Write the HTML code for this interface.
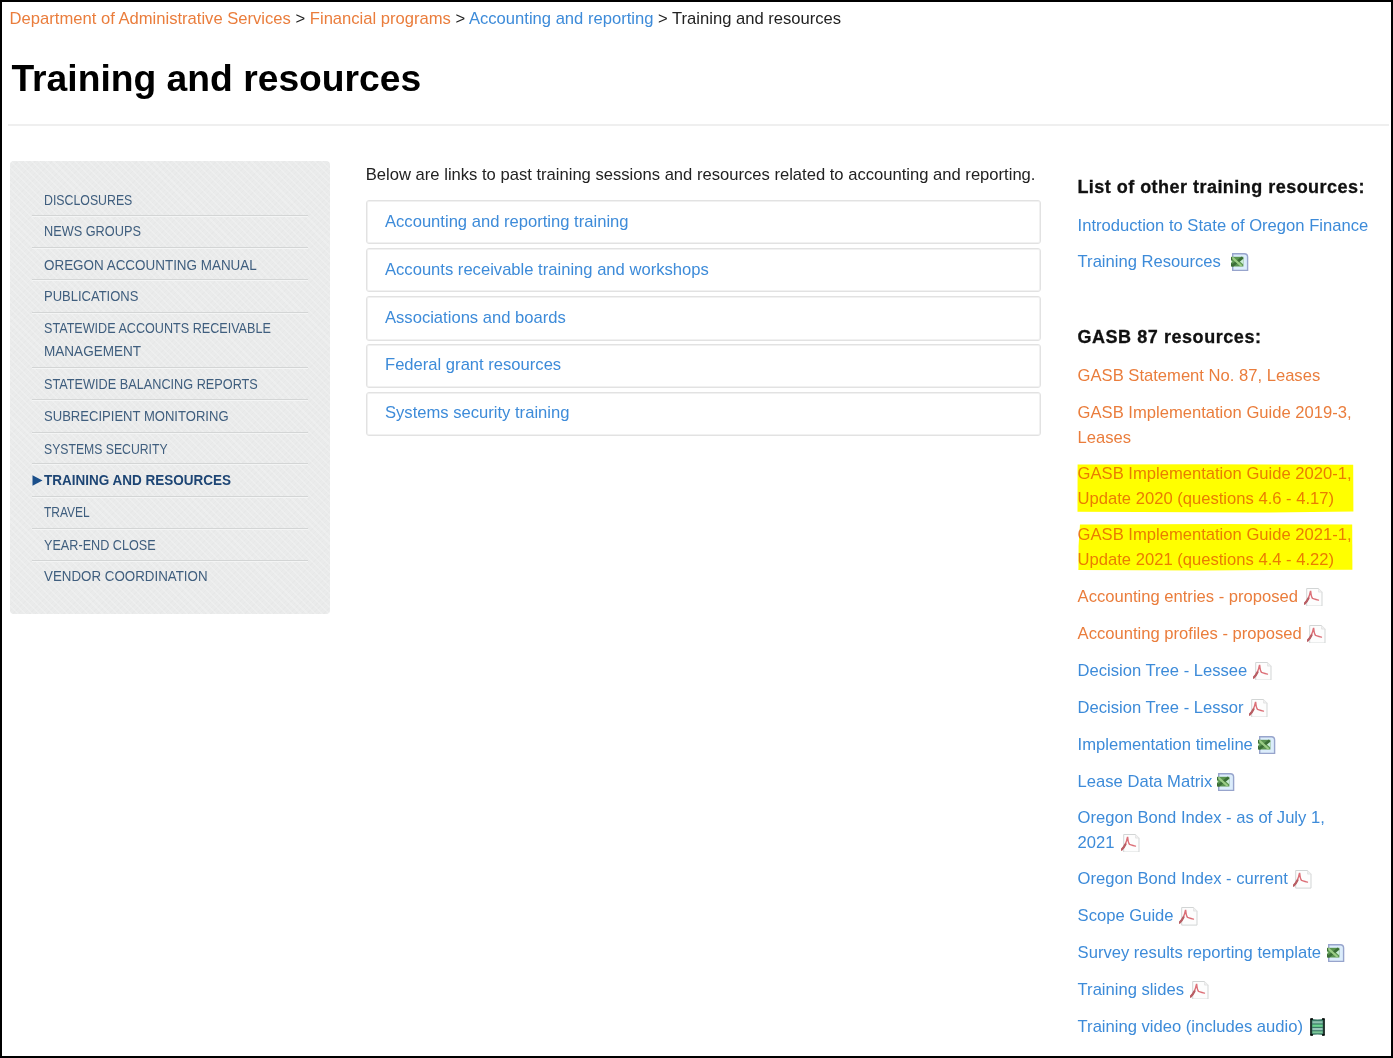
<!DOCTYPE html>
<html><head><meta charset="utf-8"><title>Training and resources</title><style>
*{margin:0;padding:0;box-sizing:border-box}
html,body{width:1393px;height:1058px;overflow:hidden;background:#fff}
body{position:relative;font-family:"Liberation Sans",sans-serif;color:#222}
.t{position:absolute;white-space:nowrap}
.frame{position:absolute;left:0;top:0;width:1393px;height:1058px;border:2px solid #000;z-index:50;pointer-events:none}
.o{color:#ea7d3c}.b{color:#3d8bd9}.d{color:#222}
.side{position:absolute;left:9.5px;top:161px;width:320.8px;height:453px;border-radius:4px;
 background-color:#eaebeb;
 background-image:repeating-linear-gradient(45deg,rgba(255,255,255,.2) 0 1.5px,rgba(255,255,255,0) 1.5px 5px),repeating-linear-gradient(-45deg,rgba(0,0,0,.012) 0 1px,rgba(0,0,0,0) 1px 4px)}
.sep{position:absolute;left:32px;width:276px;height:2px;background:#d3d5d5;border-bottom:1px solid #f4f5f5}
.si{position:absolute;font-size:14.4px;color:#3f5e7e;white-space:nowrap;transform-origin:0 15px}
.box{position:absolute;left:366px;width:675px;height:44.4px;border:1px solid #e2e2e2;border-radius:3px;background:#fff;box-shadow:inset 0 0 0 1px #f1f1f1}
.hl{position:absolute;background:#ffff00}
.ic{position:absolute}
.ii{display:inline-block}
</style></head><body>
<div class="t" style="left:9.60px;top:8.54px;font-size:16.60px;line-height:20px;color:#222;"><span class="o">Department of Administrative Services</span> &gt; <span class="o">Financial programs</span> &gt; <span class="b">Accounting and reporting</span> &gt; Training and resources</div>
<div class="t" style="left:11.40px;top:55.99px;font-size:37.25px;line-height:44px;font-weight:bold;color:#000;">Training and resources</div>
<div style="position:absolute;left:8px;top:124px;width:1381px;height:2px;background:#efefef"></div>
<div class="side"></div>
<div class="si" style="left:44.2px;top:189.51px;line-height:20px;transform:scale(0.8564,1.06);"><span>DISCLOSURES</span></div>
<div class="si" style="left:44.2px;top:221.41px;line-height:20px;transform:scale(0.8843,1.06);"><span>NEWS GROUPS</span></div>
<div class="si" style="left:44.2px;top:254.61px;line-height:20px;transform:scale(0.9336,1.06);"><span>OREGON ACCOUNTING MANUAL</span></div>
<div class="si" style="left:44.2px;top:286.01px;line-height:20px;transform:scale(0.9029,1.06);"><span>PUBLICATIONS</span></div>
<div class="si" style="left:44.2px;top:317.71px;line-height:20px;transform:scale(0.8755,1.06);"><span>STATEWIDE ACCOUNTS RECEIVABLE</span></div>
<div class="si" style="left:44.2px;top:341.41px;line-height:20px;transform:scale(0.9412,1.06);"><span>MANAGEMENT</span></div>
<div class="si" style="left:44.2px;top:374.01px;line-height:20px;transform:scale(0.8826,1.06);"><span>STATEWIDE BALANCING REPORTS</span></div>
<div class="si" style="left:44.2px;top:405.81px;line-height:20px;transform:scale(0.9075,1.06);"><span>SUBRECIPIENT MONITORING</span></div>
<div class="si" style="left:44.2px;top:438.81px;line-height:20px;transform:scale(0.8493,1.06);"><span>SYSTEMS SECURITY</span></div>
<div class="si" style="left:44.2px;top:470.01px;line-height:20px;transform:scale(0.9382,1.06);font-weight:bold;color:#1d4574;"><span>TRAINING AND RESOURCES</span></div>
<div class="si" style="left:44.2px;top:502.31px;line-height:20px;transform:scale(0.8327,1.06);"><span>TRAVEL</span></div>
<div class="si" style="left:44.2px;top:534.61px;line-height:20px;transform:scale(0.8784,1.06);"><span>YEAR-END CLOSE</span></div>
<div class="si" style="left:44.2px;top:566.31px;line-height:20px;transform:scale(0.9269,1.06);"><span>VENDOR COORDINATION</span></div>
<svg class="ic" style="left:32px;top:474.5px" width="11" height="11" viewBox="0 0 11 11"><path d="M0.5 0.3 L10.5 5.5 L0.5 10.7Z" fill="#1b4f8a"/></svg>
<div class="sep" style="top:215.2px"></div>
<div class="sep" style="top:247.0px"></div>
<div class="sep" style="top:279.3px"></div>
<div class="sep" style="top:311.6px"></div>
<div class="sep" style="top:367.2px"></div>
<div class="sep" style="top:398.9px"></div>
<div class="sep" style="top:431.6px"></div>
<div class="sep" style="top:463.4px"></div>
<div class="sep" style="top:496.0px"></div>
<div class="sep" style="top:528.2px"></div>
<div class="sep" style="top:559.6px"></div>
<div class="t" style="left:365.80px;top:164.54px;font-size:16.60px;line-height:20px;color:#222;">Below are links to past training sessions and resources related to accounting and reporting.</div>
<div class="box" style="top:200.0px"></div>
<div class="t" style="left:385.00px;top:212.14px;font-size:16.60px;line-height:20px;color:#3d8bd9;">Accounting and reporting training</div>
<div class="box" style="top:247.8px"></div>
<div class="t" style="left:385.00px;top:260.14px;font-size:16.60px;line-height:20px;color:#3d8bd9;">Accounts receivable training and workshops</div>
<div class="box" style="top:296.4px"></div>
<div class="t" style="left:385.00px;top:307.74px;font-size:16.60px;line-height:20px;color:#3d8bd9;">Associations and boards</div>
<div class="box" style="top:344.1px"></div>
<div class="t" style="left:385.00px;top:355.24px;font-size:16.60px;line-height:20px;color:#3d8bd9;">Federal grant resources</div>
<div class="box" style="top:391.6px"></div>
<div class="t" style="left:385.00px;top:402.54px;font-size:16.60px;line-height:20px;color:#3d8bd9;">Systems security training</div>
<div class="t" style="left:1077.40px;top:176.56px;font-size:18.00px;line-height:20px;font-weight:bold;color:#111;letter-spacing:0.47px;-webkit-text-stroke:0.3px #111;">List of other training resources:</div>
<div class="t" style="left:1077.40px;top:327.16px;font-size:18.00px;line-height:20px;font-weight:bold;color:#111;letter-spacing:0.56px;-webkit-text-stroke:0.3px #111;">GASB 87 resources:</div>
<div class="t" style="left:1077.60px;top:215.54px;font-size:16.60px;line-height:20px;color:#3d8bd9;">Introduction to State of Oregon Finance</div>
<div class="t" style="left:1077.60px;top:252.44px;font-size:16.60px;line-height:20px;color:#3d8bd9;">Training Resources <svg class="ii" style="margin-left:5.4px;vertical-align:-4px" width="18" height="18" viewBox="0 0 18 18"><path d="M1.7 0.8 H13.4 Q16.6 0.8 16.6 4 V17.4 H1.7 Z" fill="#dcedfb" stroke="#97a4cc" stroke-width="1.4"/><rect x="0" y="3.8" width="12.4" height="9.7" fill="#5a9450"/><path d="M12.4 5.6 L8.9 8.6 L12.4 11.6 Z" fill="#c9ebd6"/><path d="M0 7.2 L1.5 8.6 L0 10 Z" fill="#d4efcf"/><path d="M11.6 4.4 L1 13" stroke="#3b6e37" stroke-width="2.6"/><path d="M1 4.4 L10.6 13" stroke="#9ccd86" stroke-width="2.2"/><path d="M0.6 4.2 V7 M0.6 10.3 V13.2" stroke="#3b6a36" stroke-width="1.2"/></svg></div>
<div class="t" style="left:1077.60px;top:365.64px;font-size:16.60px;line-height:20px;color:#ea7d3c;">GASB Statement No. 87, Leases</div>
<div class="t" style="left:1077.60px;top:402.64px;font-size:16.60px;line-height:20px;color:#ea7d3c;">GASB Implementation Guide 2019-3,</div>
<div class="t" style="left:1077.60px;top:427.54px;font-size:16.60px;line-height:20px;color:#ea7d3c;">Leases</div>
<div class="t" style="left:1077.60px;top:464.14px;font-size:16.60px;line-height:20px;color:#ea7d3c;">GASB Implementation Guide 2020-1,</div>
<div class="t" style="left:1077.60px;top:488.94px;font-size:16.60px;line-height:20px;color:#ea7d3c;">Update 2020 (questions 4.6 - 4.17)</div>
<div class="t" style="left:1077.60px;top:525.14px;font-size:16.60px;line-height:20px;color:#ea7d3c;">GASB Implementation Guide 2021-1,</div>
<div class="t" style="left:1077.60px;top:549.54px;font-size:16.60px;line-height:20px;color:#ea7d3c;">Update 2021 (questions 4.4 - 4.22)</div>
<div class="t" style="left:1077.60px;top:586.94px;font-size:16.60px;line-height:20px;color:#ea7d3c;">Accounting entries - proposed <svg class="ii" style="margin-left:1.2px;vertical-align:-4.4px" width="19" height="18.6" viewBox="0 0 19 18.6"><path d="M2.7 0.5 H14.6 L18 3.9 V18.1 H2.7 Z" fill="#fdfdfd" stroke="#d2d5d5" stroke-width="1"/><path d="M14.6 0.6 V4.1 H18.1" fill="#f0f0f0" stroke="#dcdcdc" stroke-width="0.7"/><path d="M0.6 15.6 C3 13.5 5.3 9 6.6 2.8 C7 6.8 7.6 9.6 8.6 10.4 C10.5 11.1 12.5 11.5 14.4 12.1" fill="none" stroke="#dc7078" stroke-width="1.5" stroke-linecap="round"/><path d="M0.6 15.6 C2.4 14 3.6 12.3 4.5 10.3" fill="none" stroke="#b85e64" stroke-width="2.1" stroke-linecap="round"/></svg></div>
<div class="t" style="left:1077.60px;top:624.04px;font-size:16.60px;line-height:20px;color:#ea7d3c;">Accounting profiles - proposed <svg class="ii" style="margin-left:1.0px;vertical-align:-4.4px" width="19" height="18.6" viewBox="0 0 19 18.6"><path d="M2.7 0.5 H14.6 L18 3.9 V18.1 H2.7 Z" fill="#fdfdfd" stroke="#d2d5d5" stroke-width="1"/><path d="M14.6 0.6 V4.1 H18.1" fill="#f0f0f0" stroke="#dcdcdc" stroke-width="0.7"/><path d="M0.6 15.6 C3 13.5 5.3 9 6.6 2.8 C7 6.8 7.6 9.6 8.6 10.4 C10.5 11.1 12.5 11.5 14.4 12.1" fill="none" stroke="#dc7078" stroke-width="1.5" stroke-linecap="round"/><path d="M0.6 15.6 C2.4 14 3.6 12.3 4.5 10.3" fill="none" stroke="#b85e64" stroke-width="2.1" stroke-linecap="round"/></svg></div>
<div class="t" style="left:1077.60px;top:661.04px;font-size:16.60px;line-height:20px;color:#3d8bd9;">Decision Tree - Lessee <svg class="ii" style="margin-left:0.6px;vertical-align:-4.4px" width="19" height="18.6" viewBox="0 0 19 18.6"><path d="M2.7 0.5 H14.6 L18 3.9 V18.1 H2.7 Z" fill="#fdfdfd" stroke="#d2d5d5" stroke-width="1"/><path d="M14.6 0.6 V4.1 H18.1" fill="#f0f0f0" stroke="#dcdcdc" stroke-width="0.7"/><path d="M0.6 15.6 C3 13.5 5.3 9 6.6 2.8 C7 6.8 7.6 9.6 8.6 10.4 C10.5 11.1 12.5 11.5 14.4 12.1" fill="none" stroke="#dc7078" stroke-width="1.5" stroke-linecap="round"/><path d="M0.6 15.6 C2.4 14 3.6 12.3 4.5 10.3" fill="none" stroke="#b85e64" stroke-width="2.1" stroke-linecap="round"/></svg></div>
<div class="t" style="left:1077.60px;top:697.94px;font-size:16.60px;line-height:20px;color:#3d8bd9;">Decision Tree - Lessor <svg class="ii" style="margin-left:0.6px;vertical-align:-4.4px" width="19" height="18.6" viewBox="0 0 19 18.6"><path d="M2.7 0.5 H14.6 L18 3.9 V18.1 H2.7 Z" fill="#fdfdfd" stroke="#d2d5d5" stroke-width="1"/><path d="M14.6 0.6 V4.1 H18.1" fill="#f0f0f0" stroke="#dcdcdc" stroke-width="0.7"/><path d="M0.6 15.6 C3 13.5 5.3 9 6.6 2.8 C7 6.8 7.6 9.6 8.6 10.4 C10.5 11.1 12.5 11.5 14.4 12.1" fill="none" stroke="#dc7078" stroke-width="1.5" stroke-linecap="round"/><path d="M0.6 15.6 C2.4 14 3.6 12.3 4.5 10.3" fill="none" stroke="#b85e64" stroke-width="2.1" stroke-linecap="round"/></svg></div>
<div class="t" style="left:1077.60px;top:734.84px;font-size:16.60px;line-height:20px;color:#3d8bd9;">Implementation timeline <svg class="ii" style="margin-left:0.4px;vertical-align:-4px" width="18" height="18" viewBox="0 0 18 18"><path d="M1.7 0.8 H13.4 Q16.6 0.8 16.6 4 V17.4 H1.7 Z" fill="#dcedfb" stroke="#97a4cc" stroke-width="1.4"/><rect x="0" y="3.8" width="12.4" height="9.7" fill="#5a9450"/><path d="M12.4 5.6 L8.9 8.6 L12.4 11.6 Z" fill="#c9ebd6"/><path d="M0 7.2 L1.5 8.6 L0 10 Z" fill="#d4efcf"/><path d="M11.6 4.4 L1 13" stroke="#3b6e37" stroke-width="2.6"/><path d="M1 4.4 L10.6 13" stroke="#9ccd86" stroke-width="2.2"/><path d="M0.6 4.2 V7 M0.6 10.3 V13.2" stroke="#3b6a36" stroke-width="1.2"/></svg></div>
<div class="t" style="left:1077.60px;top:771.64px;font-size:16.60px;line-height:20px;color:#3d8bd9;">Lease Data Matrix <svg class="ii" style="margin-left:0.4px;vertical-align:-4px" width="18" height="18" viewBox="0 0 18 18"><path d="M1.7 0.8 H13.4 Q16.6 0.8 16.6 4 V17.4 H1.7 Z" fill="#dcedfb" stroke="#97a4cc" stroke-width="1.4"/><rect x="0" y="3.8" width="12.4" height="9.7" fill="#5a9450"/><path d="M12.4 5.6 L8.9 8.6 L12.4 11.6 Z" fill="#c9ebd6"/><path d="M0 7.2 L1.5 8.6 L0 10 Z" fill="#d4efcf"/><path d="M11.6 4.4 L1 13" stroke="#3b6e37" stroke-width="2.6"/><path d="M1 4.4 L10.6 13" stroke="#9ccd86" stroke-width="2.2"/><path d="M0.6 4.2 V7 M0.6 10.3 V13.2" stroke="#3b6a36" stroke-width="1.2"/></svg></div>
<div class="t" style="left:1077.60px;top:808.44px;font-size:16.60px;line-height:20px;color:#3d8bd9;">Oregon Bond Index - as of July 1,</div>
<div class="t" style="left:1077.60px;top:832.74px;font-size:16.60px;line-height:20px;color:#3d8bd9;">2021 <svg class="ii" style="margin-left:2.0px;vertical-align:-4.4px" width="19" height="18.6" viewBox="0 0 19 18.6"><path d="M2.7 0.5 H14.6 L18 3.9 V18.1 H2.7 Z" fill="#fdfdfd" stroke="#d2d5d5" stroke-width="1"/><path d="M14.6 0.6 V4.1 H18.1" fill="#f0f0f0" stroke="#dcdcdc" stroke-width="0.7"/><path d="M0.6 15.6 C3 13.5 5.3 9 6.6 2.8 C7 6.8 7.6 9.6 8.6 10.4 C10.5 11.1 12.5 11.5 14.4 12.1" fill="none" stroke="#dc7078" stroke-width="1.5" stroke-linecap="round"/><path d="M0.6 15.6 C2.4 14 3.6 12.3 4.5 10.3" fill="none" stroke="#b85e64" stroke-width="2.1" stroke-linecap="round"/></svg></div>
<div class="t" style="left:1077.60px;top:869.34px;font-size:16.60px;line-height:20px;color:#3d8bd9;">Oregon Bond Index - current <svg class="ii" style="margin-left:0.8px;vertical-align:-4.4px" width="19" height="18.6" viewBox="0 0 19 18.6"><path d="M2.7 0.5 H14.6 L18 3.9 V18.1 H2.7 Z" fill="#fdfdfd" stroke="#d2d5d5" stroke-width="1"/><path d="M14.6 0.6 V4.1 H18.1" fill="#f0f0f0" stroke="#dcdcdc" stroke-width="0.7"/><path d="M0.6 15.6 C3 13.5 5.3 9 6.6 2.8 C7 6.8 7.6 9.6 8.6 10.4 C10.5 11.1 12.5 11.5 14.4 12.1" fill="none" stroke="#dc7078" stroke-width="1.5" stroke-linecap="round"/><path d="M0.6 15.6 C2.4 14 3.6 12.3 4.5 10.3" fill="none" stroke="#b85e64" stroke-width="2.1" stroke-linecap="round"/></svg></div>
<div class="t" style="left:1077.60px;top:906.14px;font-size:16.60px;line-height:20px;color:#3d8bd9;">Scope Guide <svg class="ii" style="margin-left:0.8px;vertical-align:-4.4px" width="19" height="18.6" viewBox="0 0 19 18.6"><path d="M2.7 0.5 H14.6 L18 3.9 V18.1 H2.7 Z" fill="#fdfdfd" stroke="#d2d5d5" stroke-width="1"/><path d="M14.6 0.6 V4.1 H18.1" fill="#f0f0f0" stroke="#dcdcdc" stroke-width="0.7"/><path d="M0.6 15.6 C3 13.5 5.3 9 6.6 2.8 C7 6.8 7.6 9.6 8.6 10.4 C10.5 11.1 12.5 11.5 14.4 12.1" fill="none" stroke="#dc7078" stroke-width="1.5" stroke-linecap="round"/><path d="M0.6 15.6 C2.4 14 3.6 12.3 4.5 10.3" fill="none" stroke="#b85e64" stroke-width="2.1" stroke-linecap="round"/></svg></div>
<div class="t" style="left:1077.60px;top:942.94px;font-size:16.60px;line-height:20px;color:#3d8bd9;">Survey results reporting template <svg class="ii" style="margin-left:0.8px;vertical-align:-4px" width="18" height="18" viewBox="0 0 18 18"><path d="M1.7 0.8 H13.4 Q16.6 0.8 16.6 4 V17.4 H1.7 Z" fill="#dcedfb" stroke="#97a4cc" stroke-width="1.4"/><rect x="0" y="3.8" width="12.4" height="9.7" fill="#5a9450"/><path d="M12.4 5.6 L8.9 8.6 L12.4 11.6 Z" fill="#c9ebd6"/><path d="M0 7.2 L1.5 8.6 L0 10 Z" fill="#d4efcf"/><path d="M11.6 4.4 L1 13" stroke="#3b6e37" stroke-width="2.6"/><path d="M1 4.4 L10.6 13" stroke="#9ccd86" stroke-width="2.2"/><path d="M0.6 4.2 V7 M0.6 10.3 V13.2" stroke="#3b6a36" stroke-width="1.2"/></svg></div>
<div class="t" style="left:1077.60px;top:979.84px;font-size:16.60px;line-height:20px;color:#3d8bd9;">Training slides <svg class="ii" style="margin-left:1.2px;vertical-align:-4.4px" width="19" height="18.6" viewBox="0 0 19 18.6"><path d="M2.7 0.5 H14.6 L18 3.9 V18.1 H2.7 Z" fill="#fdfdfd" stroke="#d2d5d5" stroke-width="1"/><path d="M14.6 0.6 V4.1 H18.1" fill="#f0f0f0" stroke="#dcdcdc" stroke-width="0.7"/><path d="M0.6 15.6 C3 13.5 5.3 9 6.6 2.8 C7 6.8 7.6 9.6 8.6 10.4 C10.5 11.1 12.5 11.5 14.4 12.1" fill="none" stroke="#dc7078" stroke-width="1.5" stroke-linecap="round"/><path d="M0.6 15.6 C2.4 14 3.6 12.3 4.5 10.3" fill="none" stroke="#b85e64" stroke-width="2.1" stroke-linecap="round"/></svg></div>
<div class="t" style="left:1077.60px;top:1016.64px;font-size:16.60px;line-height:20px;color:#3d8bd9;">Training video (includes audio) <svg class="ii" style="margin-left:2.4px;vertical-align:-4.2px" width="15" height="18" viewBox="0 0 15 18"><path d="M0.5 0.6 Q7.5 2.6 14.5 0.6 V17.4 Q7.5 15.6 0.5 17.4 Z" fill="#3a7a66"/><path d="M1 0.8 V17.2 M14 0.8 V17.2" stroke="#1c2a24" stroke-width="1.7"/><rect x="2.4" y="3.2" width="10.2" height="2.2" fill="#8fc2b0"/><rect x="2.4" y="6.6" width="10.2" height="2.2" fill="#6dd690"/><rect x="2.4" y="10" width="10.2" height="2.2" fill="#9bc8bc"/><rect x="2.4" y="13.3" width="10.2" height="2" fill="#7cc898"/><path d="M0.5 1 H3 M12 1 H14.5 M0.5 17 H3 M12 17 H14.5" stroke="#000" stroke-width="1.6"/></svg></div>
<svg style="position:absolute;left:0;top:0;mix-blend-mode:multiply;z-index:10" width="1393" height="1058"><path d="M1077.6 464.6 L1200 464.2 L1353.2 464.8 L1353.4 511.6 L1250 512.6 L1140 512 L1077.5 511.8 Z" fill="#ffff00"/><path d="M1080 524.4 L1220 524.1 L1352.2 524.6 L1352.4 569.8 L1200 570.4 L1078.4 569.9 L1078.6 545 Z" fill="#ffff00"/></svg>
<div class="frame"></div>
</body></html>
